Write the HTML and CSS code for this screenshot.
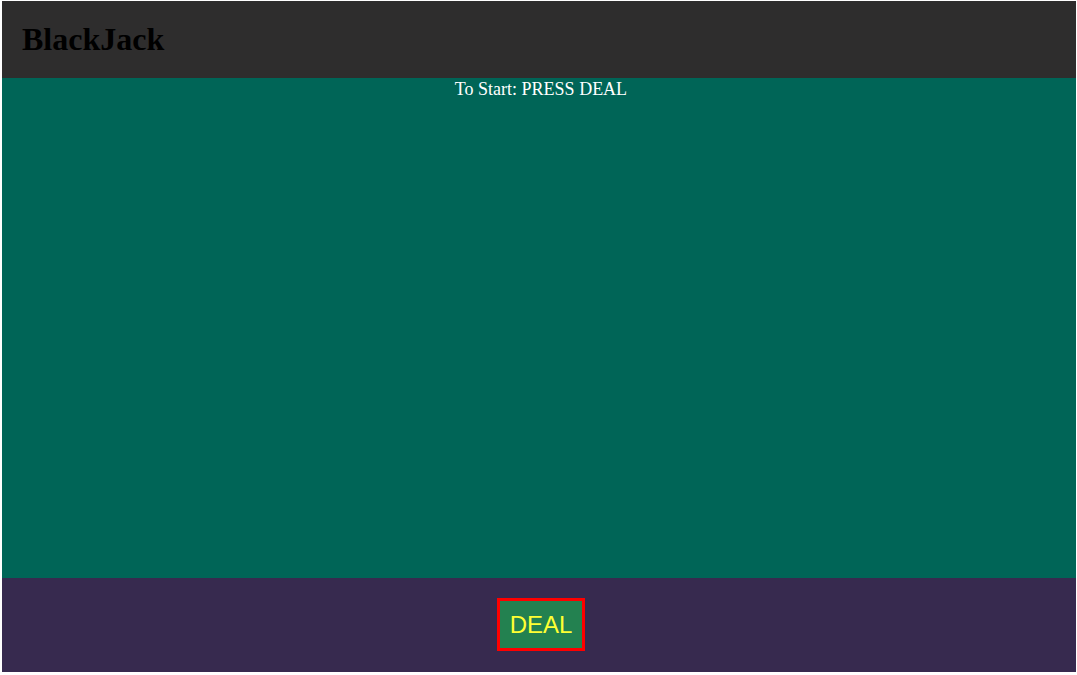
FILE: index.html
```html
<!DOCTYPE html>
<html>
<head>
<meta charset="utf-8">
<title>BlackJack</title>
<link rel="stylesheet" href="styles.css">
</head>
<body>
<div class="app">
  <header class="header"><h1 class="title">BlackJack</h1></header>
  <main class="table"><p class="status">To Start: PRESS DEAL</p></main>
  <footer class="controls"><button class="deal">DEAL</button></footer>
</div>
</body>
</html>
```
FILE: styles.css
```css
html, body {
  margin: 0;
  background: #ffffff;
}
body {
  padding: 1px 1px 3px 2px;
  font-family: "Liberation Serif", "Times New Roman", serif;
}
.app {
  display: flex;
  flex-direction: column;
}
.header {
  background: #2e2d2d;
  height: 77px;
  display: flex;
  align-items: center;
  padding-left: 20px;
}
.title {
  margin: 0;
  font-size: 32px;
  font-weight: bold;
  color: #000000;
}
.table {
  background: #006557;
  height: 500px;
  padding-left: 4px;
}
.status {
  margin: 0;
  text-align: center;
  color: #ffffff;
  font-size: 18px;
  line-height: 22px;
}
.controls {
  background: #372a4f;
  height: 94px;
  display: flex;
  justify-content: center;
  align-items: center;
  padding-left: 4px;
  padding-bottom: 1px;
  box-sizing: border-box;
}
.deal {
  font-family: "Liberation Sans", Arial, sans-serif;
  font-size: 24px;
  line-height: 27px;
  padding: 10px;
  border: 3px solid #ff0000;
  background: #238150;
  color: #ffff33;
  margin: 0;
}
```
